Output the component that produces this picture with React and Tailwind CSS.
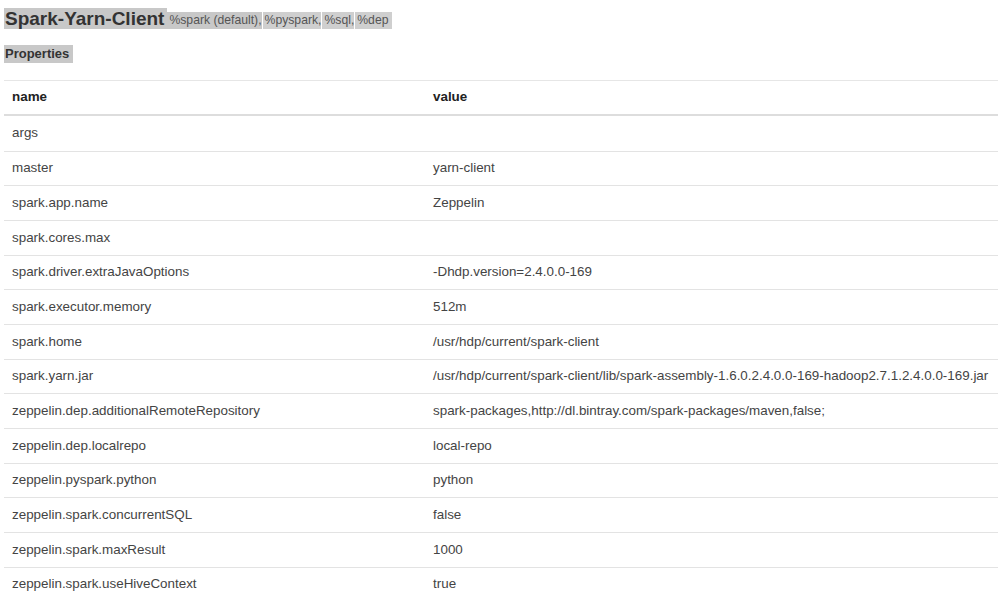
import React from "react";

const rows = [
  ["args", ""],
  ["master", "yarn-client"],
  ["spark.app.name", "Zeppelin"],
  ["spark.cores.max", ""],
  ["spark.driver.extraJavaOptions", "-Dhdp.version=2.4.0.0-169"],
  ["spark.executor.memory", "512m"],
  ["spark.home", "/usr/hdp/current/spark-client"],
  ["spark.yarn.jar", "/usr/hdp/current/spark-client/lib/spark-assembly-1.6.0.2.4.0.0-169-hadoop2.7.1.2.4.0.0-169.jar"],
  ["zeppelin.dep.additionalRemoteRepository", "spark-packages,http://dl.bintray.com/spark-packages/maven,false;"],
  ["zeppelin.dep.localrepo", "local-repo"],
  ["zeppelin.pyspark.python", "python"],
  ["zeppelin.spark.concurrentSQL", "false"],
  ["zeppelin.spark.maxResult", "1000"],
  ["zeppelin.spark.useHiveContext", "true"],
];

export default function App() {
  return (
    <div
      className="w-[998px] h-[603px] overflow-hidden bg-white text-[#333]"
      style={{ fontFamily: '"Liberation Sans", Arial, sans-serif' }}
    >
      <div className="pl-[4px] pt-[8px] flex items-end h-[29px]">
        <span className="bg-[#c8c8c8] text-[19px] leading-[21px] font-bold pl-px pr-[3px]">Spark-Yarn-Client</span>
        <span className="bg-[#c8c8c8] text-[12.2px] leading-[17px] text-[#555] pl-[2px]">%spark (default),</span>
        <span className="bg-[#cfcfcf] text-[12.2px] leading-[17px] text-[#555] ml-px pl-[2px]">%pyspark,</span>
        <span className="bg-[#cfcfcf] text-[12.2px] leading-[17px] text-[#555] ml-px pl-[2px]">%sql,</span>
        <span className="bg-[#cfcfcf] text-[12.2px] leading-[17px] text-[#555] ml-px pl-[2px] pr-[4px]">%dep</span>
      </div>
      <div className="pl-[4px] mt-[16px] h-[18px] flex">
        <span className="bg-[#c8c8c8] text-[13px] leading-[18px] font-bold pl-px pr-[4px]">Properties</span>
      </div>
      <div className="ml-[4px] mt-[17px] w-[994px] border-t border-[#e6e6e6] text-[13.4px]">
        <div className="flex border-b-2 border-[#dddddd] font-bold text-[#222] h-[35px] items-center">
          <div className="w-[421px] pl-[8px]">name</div>
          <div className="pl-[8px]">value</div>
        </div>
        {rows.map(([k, v], i) => (
          <div
            key={k}
            className={`flex h-[34.67px] items-center text-[#444] ${i > 0 ? "border-t border-[#e3e3e3]" : ""}`}
          >
            <div className="w-[421px] pl-[8px]">{k}</div>
            <div className="pl-[8px] whitespace-nowrap">{v}</div>
          </div>
        ))}
      </div>
    </div>
  );
}
